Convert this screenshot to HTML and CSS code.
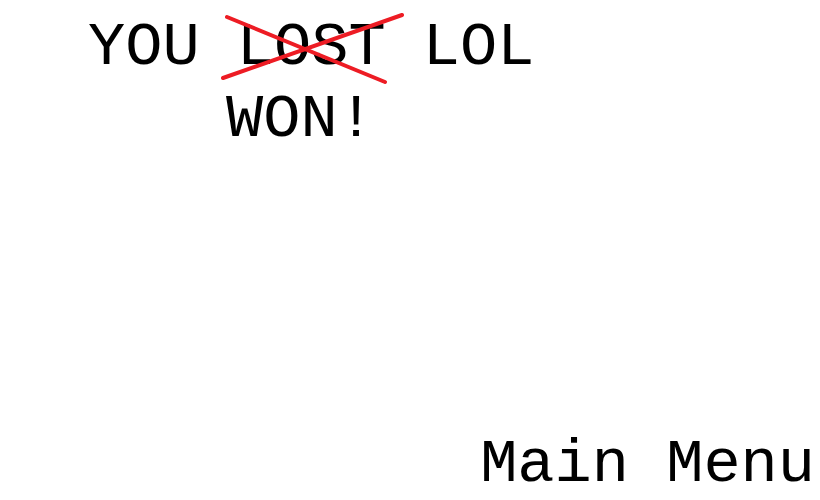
FILE: index.html
```html
<!DOCTYPE html>
<html>
<head>
<meta charset="utf-8">
<link rel="stylesheet" href="styles.css">
</head>
<body>
<main class="screen">
  <div class="title">YOU <span class="lost">LOST</span> LOL</div>
  <div class="won">WON!</div>
  <div class="menu">Main Menu</div>
  <svg class="cross" width="820" height="100" viewBox="0 0 820 100">
    <line x1="227" y1="17" x2="385" y2="82" />
    <line x1="223" y1="78" x2="402" y2="15" />
  </svg>
</main>
</body>
</html>
```
FILE: styles.css
```css
html, body {
  margin: 0;
  padding: 0;
  background: #ffffff;
}
.screen {
  position: relative;
  width: 820px;
  height: 500px;
  display: flex;
  flex-direction: column;
  font-family: "Liberation Mono", "Courier New", monospace;
  font-size: 62px;
  line-height: 70px;
  color: #000000;
  overflow: hidden;
}
.title {
  padding-top: 13px;
  padding-left: 88px;
  white-space: pre;
}
.won {
  margin-top: 2px;
  padding-left: 226px;
}
.menu {
  margin-top: auto;
  align-self: flex-end;
  padding-right: 5px;
  white-space: pre;
}
.cross {
  position: absolute;
  left: 0;
  top: 0;
}
.cross line {
  stroke: #ed1c24;
  stroke-width: 4;
  stroke-linecap: round;
}
```
